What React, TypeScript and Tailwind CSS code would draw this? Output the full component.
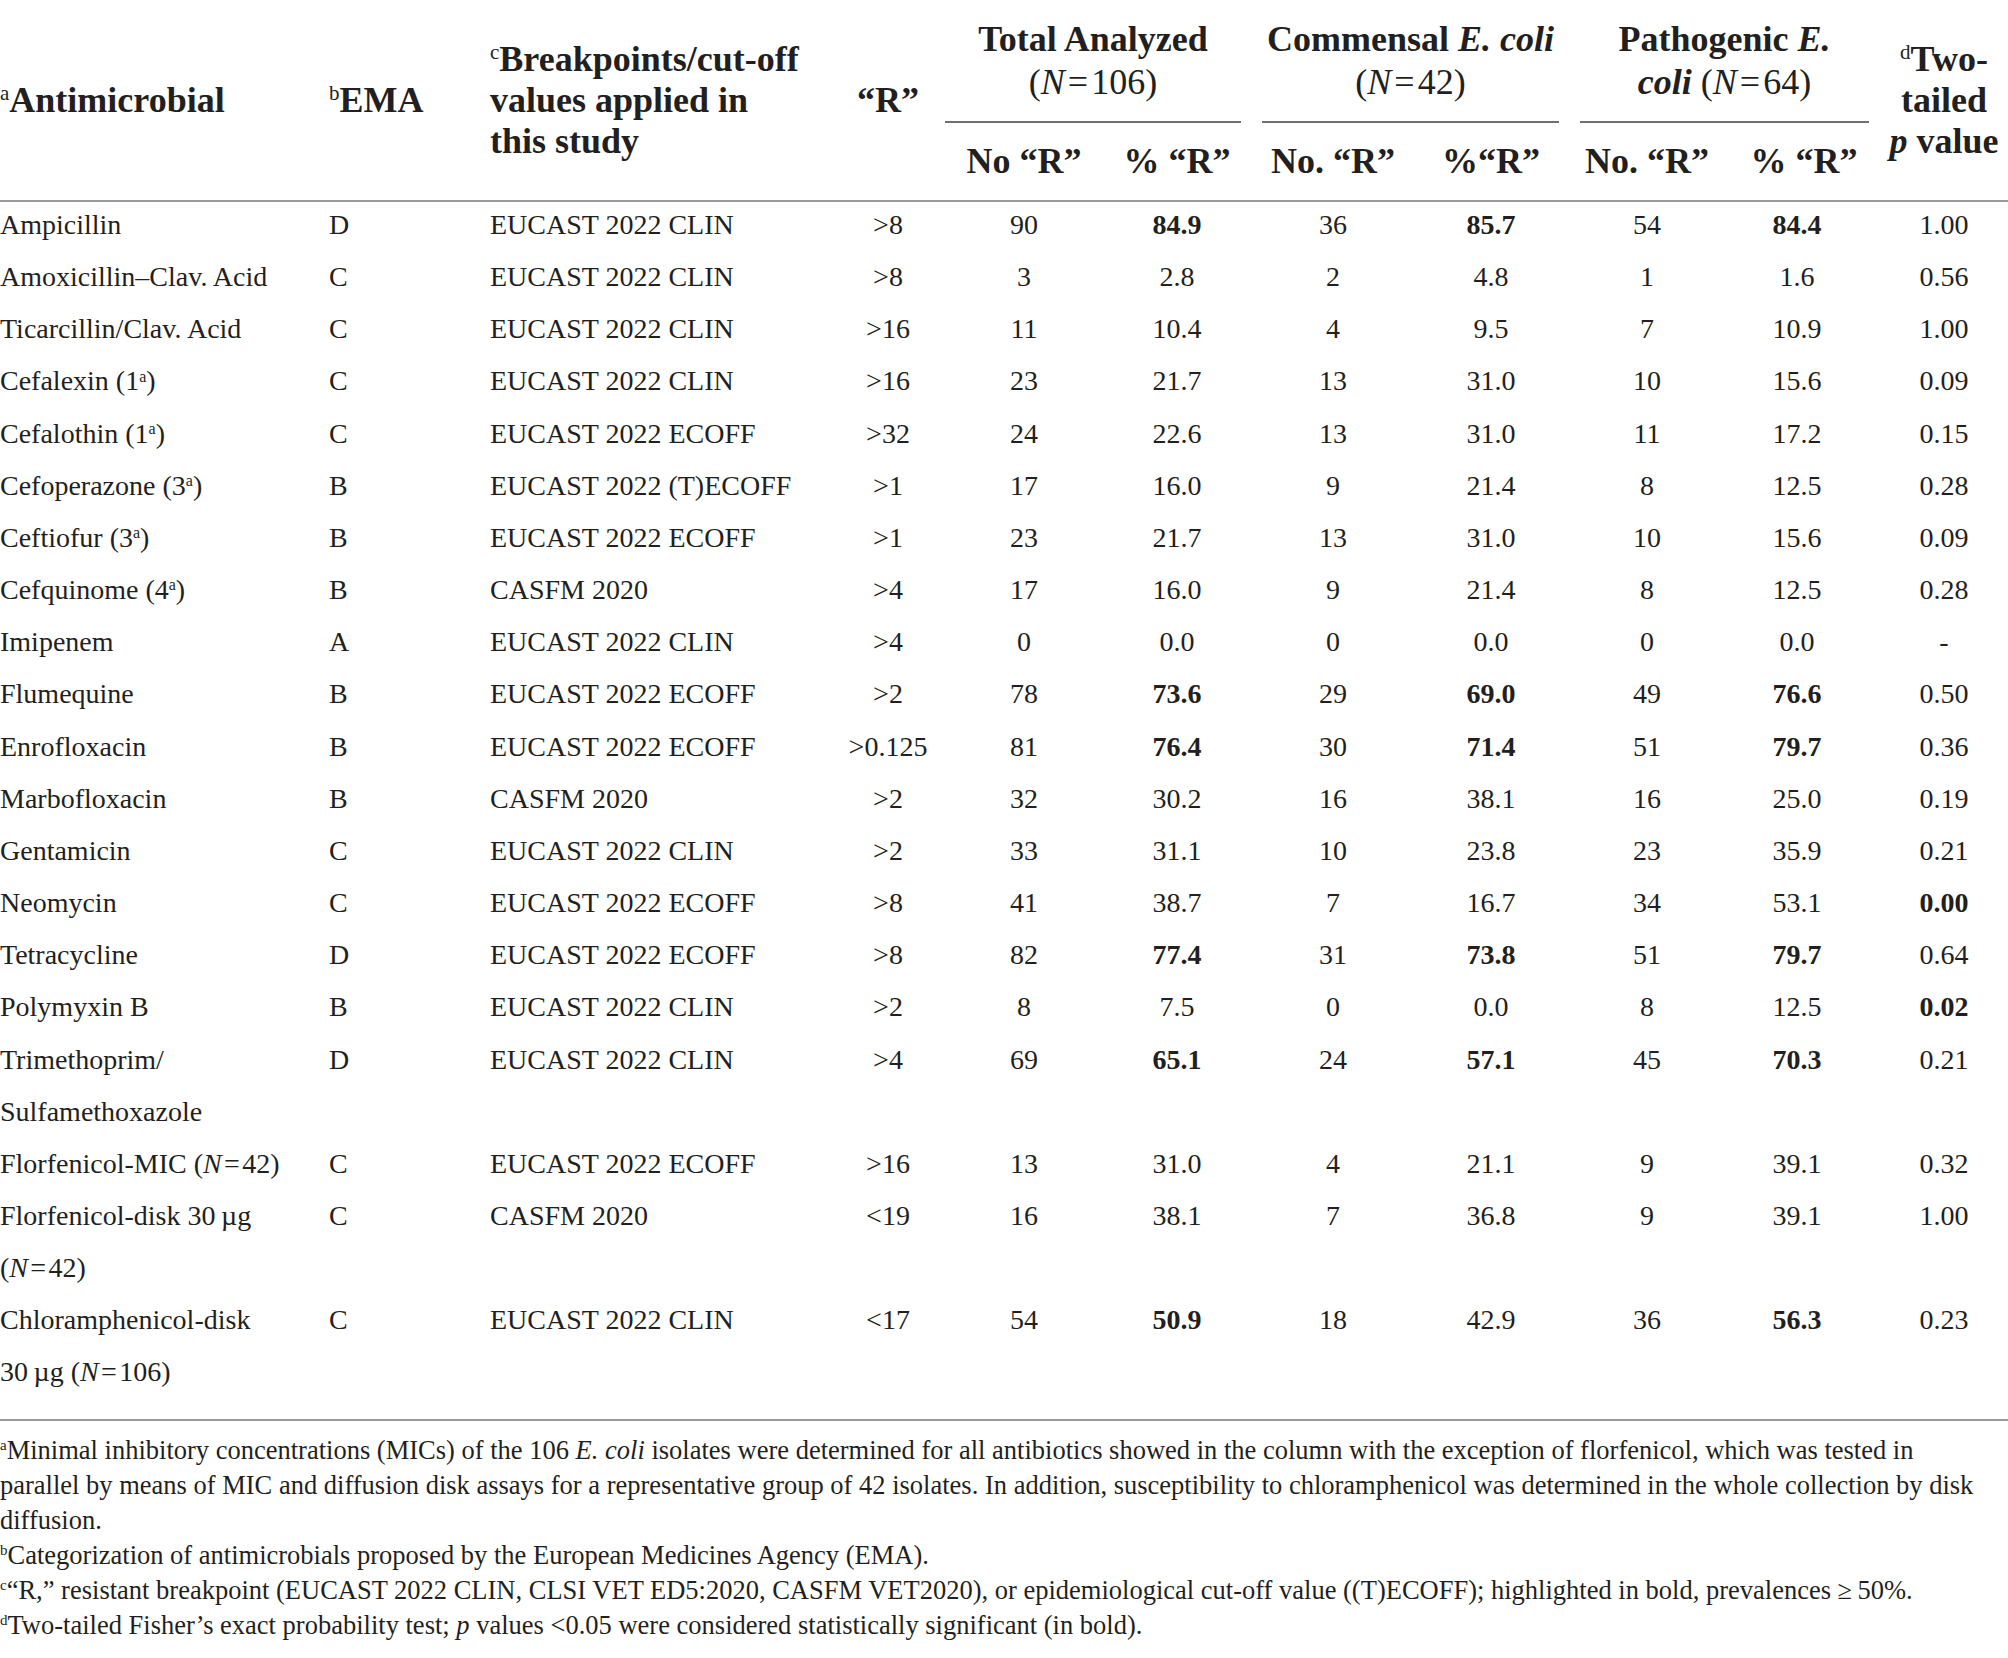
import type { ReactNode } from "react";

const Sup = ({ c, cls = "text-[16px]" }: { c: string; cls?: string }) => (
  <sup className={`${cls} font-normal top-[-0.55em]`}>{c}</sup>
);

const N = ({ n }: { n: string }) => (
  <>
    (<i>N</i>
    {"\u200a=\u200a"}
    {n})
  </>
);

type Row = {
  name: ReactNode;
  ema: string;
  bp: string;
  r: string;
  v: string[];
  bold?: number[];
};

const rows: Row[] = [
  { name: "Ampicillin", ema: "D", bp: "EUCAST 2022 CLIN", r: ">8", v: ["90", "84.9", "36", "85.7", "54", "84.4", "1.00"], bold: [1, 3, 5] },
  { name: "Amoxicillin–Clav. Acid", ema: "C", bp: "EUCAST 2022 CLIN", r: ">8", v: ["3", "2.8", "2", "4.8", "1", "1.6", "0.56"] },
  { name: "Ticarcillin/Clav. Acid", ema: "C", bp: "EUCAST 2022 CLIN", r: ">16", v: ["11", "10.4", "4", "9.5", "7", "10.9", "1.00"] },
  { name: <>Cefalexin (1<Sup c="a" />)</>, ema: "C", bp: "EUCAST 2022 CLIN", r: ">16", v: ["23", "21.7", "13", "31.0", "10", "15.6", "0.09"] },
  { name: <>Cefalothin (1<Sup c="a" />)</>, ema: "C", bp: "EUCAST 2022 ECOFF", r: ">32", v: ["24", "22.6", "13", "31.0", "11", "17.2", "0.15"] },
  { name: <>Cefoperazone (3<Sup c="a" />)</>, ema: "B", bp: "EUCAST 2022 (T)ECOFF", r: ">1", v: ["17", "16.0", "9", "21.4", "8", "12.5", "0.28"] },
  { name: <>Ceftiofur (3<Sup c="a" />)</>, ema: "B", bp: "EUCAST 2022 ECOFF", r: ">1", v: ["23", "21.7", "13", "31.0", "10", "15.6", "0.09"] },
  { name: <>Cefquinome (4<Sup c="a" />)</>, ema: "B", bp: "CASFM 2020", r: ">4", v: ["17", "16.0", "9", "21.4", "8", "12.5", "0.28"] },
  { name: "Imipenem", ema: "A", bp: "EUCAST 2022 CLIN", r: ">4", v: ["0", "0.0", "0", "0.0", "0", "0.0", "-"] },
  { name: "Flumequine", ema: "B", bp: "EUCAST 2022 ECOFF", r: ">2", v: ["78", "73.6", "29", "69.0", "49", "76.6", "0.50"], bold: [1, 3, 5] },
  { name: "Enrofloxacin", ema: "B", bp: "EUCAST 2022 ECOFF", r: ">0.125", v: ["81", "76.4", "30", "71.4", "51", "79.7", "0.36"], bold: [1, 3, 5] },
  { name: "Marbofloxacin", ema: "B", bp: "CASFM 2020", r: ">2", v: ["32", "30.2", "16", "38.1", "16", "25.0", "0.19"] },
  { name: "Gentamicin", ema: "C", bp: "EUCAST 2022 CLIN", r: ">2", v: ["33", "31.1", "10", "23.8", "23", "35.9", "0.21"] },
  { name: "Neomycin", ema: "C", bp: "EUCAST 2022 ECOFF", r: ">8", v: ["41", "38.7", "7", "16.7", "34", "53.1", "0.00"], bold: [6] },
  { name: "Tetracycline", ema: "D", bp: "EUCAST 2022 ECOFF", r: ">8", v: ["82", "77.4", "31", "73.8", "51", "79.7", "0.64"], bold: [1, 3, 5] },
  { name: "Polymyxin B", ema: "B", bp: "EUCAST 2022 CLIN", r: ">2", v: ["8", "7.5", "0", "0.0", "8", "12.5", "0.02"], bold: [6] },
  { name: <>Trimethoprim/<br />Sulfamethoxazole</>, ema: "D", bp: "EUCAST 2022 CLIN", r: ">4", v: ["69", "65.1", "24", "57.1", "45", "70.3", "0.21"], bold: [1, 3, 5] },
  { name: <>Florfenicol-MIC <N n="42" /></>, ema: "C", bp: "EUCAST 2022 ECOFF", r: ">16", v: ["13", "31.0", "4", "21.1", "9", "39.1", "0.32"] },
  { name: <>Florfenicol-disk 30{"\u2009"}µg<br /><N n="42" /></>, ema: "C", bp: "CASFM 2020", r: "<19", v: ["16", "38.1", "7", "36.8", "9", "39.1", "1.00"] },
  { name: <>Chloramphenicol-disk<br />30{"\u2009"}µg <N n="106" /></>, ema: "C", bp: "EUCAST 2022 CLIN", r: "<17", v: ["54", "50.9", "18", "42.9", "36", "56.3", "0.23"], bold: [1, 5] },
];

// padding tweaks so values sit where the print has them
const numCls = [
  "text-center",
  "text-center",
  "text-center",
  "text-center",
  "text-center",
  "text-center pr-[20px]",
  "text-center",
];

export default function App() {
  return (
    <div className="w-[2008px] min-h-[1658px] bg-white text-[#231f20] font-['Liberation_Serif','Times_New_Roman',serif]">
      <table className="w-[2008px] table-fixed border-collapse">
        <colgroup>
          <col className="w-[319px]" />
          <col className="w-[161px]" />
          <col className="w-[358px]" />
          <col className="w-[100px]" />
          <col className="w-[172px]" />
          <col className="w-[134px]" />
          <col className="w-[178px]" />
          <col className="w-[138px]" />
          <col className="w-[174px]" />
          <col className="w-[146px]" />
          <col className="w-[128px]" />
        </colgroup>
        <thead className="border-b-2 border-[#9a9a9a] text-[36px] font-bold leading-[41px]">
          <tr className="h-[123px]">
            <th rowSpan={2} className="p-0 text-left align-middle whitespace-nowrap">
              <Sup c="a" cls="text-[21px]" />
              Antimicrobial
            </th>
            <th rowSpan={2} className="p-0 pl-[10px] text-left align-middle whitespace-nowrap">
              <Sup c="b" cls="text-[21px]" />
              EMA
            </th>
            <th rowSpan={2} className="p-0 pl-[10px] text-left align-middle whitespace-nowrap">
              <Sup c="c" cls="text-[21px]" />
              Breakpoints/cut-off
              <br />
              values applied in
              <br />
              this study
            </th>
            <th rowSpan={2} className="p-0 text-center align-middle">
              “R”
            </th>
            <th colSpan={2} className="p-0 align-top">
              <div className="ml-[7px] mr-[3px] h-[123px] border-b-2 border-[#707070] flex flex-col items-center justify-center leading-[43px] whitespace-nowrap">
                <span>Total Analyzed</span>
                <span className="font-normal">
                  <N n="106" />
                </span>
              </div>
            </th>
            <th colSpan={2} className="p-0 align-top">
              <div className="ml-[18px] mr-[1px] h-[123px] border-b-2 border-[#707070] flex flex-col items-center justify-center leading-[43px] whitespace-nowrap">
                <span>
                  Commensal <i>E. coli</i>
                </span>
                <span className="font-normal">
                  <N n="42" />
                </span>
              </div>
            </th>
            <th colSpan={2} className="p-0 align-top">
              <div className="ml-[20px] mr-[11px] h-[123px] border-b-2 border-[#707070] flex flex-col items-center justify-center leading-[43px] whitespace-nowrap">
                <span>
                  Pathogenic <i>E.</i>
                </span>
                <span className="font-normal">
                  <i className="font-bold">coli</i> <N n="64" />
                </span>
              </div>
            </th>
            <th rowSpan={2} className="p-0 text-center align-middle whitespace-nowrap">
              <Sup c="d" cls="text-[21px]" />
              Two-
              <br />
              tailed
              <br />
              <i>p</i> value
            </th>
          </tr>
          <tr className="h-[78px]">
            <th className="p-0 text-center align-middle whitespace-nowrap">No “R”</th>
            <th className="p-0 text-center align-middle whitespace-nowrap">% “R”</th>
            <th className="p-0 text-center align-middle whitespace-nowrap">No. “R”</th>
            <th className="p-0 text-center align-middle whitespace-nowrap">%“R”</th>
            <th className="p-0 text-center align-middle whitespace-nowrap">No. “R”</th>
            <th className="p-0 pr-[6px] text-center align-middle whitespace-nowrap">% “R”</th>
          </tr>
        </thead>
        <tbody className="text-[28px] leading-[52.15px]">
          {rows.map((row, i) => {
            const last = i === rows.length - 1;
            const pb = last ? "pb-[17px]" : "";
            return (
              <tr key={i}>
                <td className={`p-0 relative top-[-3px] align-top whitespace-nowrap ${pb}`}>{row.name}</td>
                <td className={`p-0 pl-[10px] relative top-[-3px] align-top ${pb}`}>{row.ema}</td>
                <td className={`p-0 pl-[10px] relative top-[-3px] align-top whitespace-nowrap ${pb}`}>{row.bp}</td>
                <td className={`p-0 relative top-[-3px] text-center align-top ${pb}`}>{row.r}</td>
                {row.v.map((val, j) => (
                  <td
                    key={j}
                    className={`p-0 relative top-[-3px] align-top ${numCls[j]} ${pb} ${row.bold?.includes(j) ? "font-bold" : ""}`}
                  >
                    {val}
                  </td>
                ))}
              </tr>
            );
          })}
        </tbody>
      </table>

      <div className="border-t-2 border-[#9a9a9a] pt-[12px] text-[26.5px] leading-[35px]">
        <p className="whitespace-nowrap">
          <Sup c="a" cls="text-[15px]" />
          Minimal inhibitory concentrations (MICs) of the 106 <i>E. coli</i> isolates were determined for all antibiotics showed in the column with the exception of florfenicol, which was tested in
        </p>
        <p className="whitespace-nowrap">
          parallel by means of MIC and diffusion disk assays for a representative group of 42 isolates. In addition, susceptibility to chloramphenicol was determined in the whole collection by disk
        </p>
        <p className="whitespace-nowrap">diffusion.</p>
        <p className="whitespace-nowrap">
          <Sup c="b" cls="text-[15px]" />
          Categorization of antimicrobials proposed by the European Medicines Agency (EMA).
        </p>
        <p className="whitespace-nowrap">
          <Sup c="c" cls="text-[15px]" />
          “R,” resistant breakpoint (EUCAST 2022 CLIN, CLSI VET ED5:2020, CASFM VET2020), or epidemiological cut-off value ((T)ECOFF); highlighted in bold, prevalences ≥{"\u2009"}50%.
        </p>
        <p className="whitespace-nowrap">
          <Sup c="d" cls="text-[15px]" />
          Two-tailed Fisher’s exact probability test; <i>p</i> values &lt;0.05 were considered statistically significant (in bold).
        </p>
      </div>
    </div>
  );
}
